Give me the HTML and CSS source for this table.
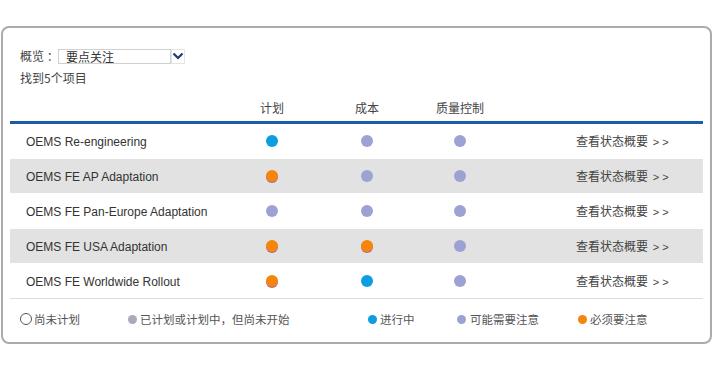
FILE: index.html
```html
<!DOCTYPE html>
<html lang="zh-CN">
<head>
<meta charset="utf-8">
<title>概览</title>
<link rel="stylesheet" href="styles.css">
</head>
<body>
<div class="panel">
  <div class="filter">
    <span class="filter-label">概览 ：</span>
    <span class="select">要点关注</span>
    <span class="select-btn">
      <svg width="12" height="8" viewBox="0 0 12 8"><path d="M1.5 1.5 L6 6 L10.5 1.5" fill="none" stroke="#1d3b6e" stroke-width="2.2"/></svg>
    </span>
  </div>
  <div class="count">找到5个项目</div>

  <div class="table">
    <div class="thead grid">
      <span></span>
      <span class="c">计划</span>
      <span class="c">成本</span>
      <span class="c">质量控制</span>
      <span></span>
    </div>
    <div class="row grid">
      <span class="name">OEMS Re-engineering</span>
      <span class="c"><i class="dot blue"></i></span>
      <span class="c"><i class="dot lav"></i></span>
      <span class="c"><i class="dot lav"></i></span>
      <span class="link">查看状态概要 <b>&gt; &gt;</b></span>
    </div>
    <div class="row grid alt">
      <span class="name">OEMS FE AP Adaptation</span>
      <span class="c"><i class="dot orange"></i></span>
      <span class="c"><i class="dot lav"></i></span>
      <span class="c"><i class="dot lav"></i></span>
      <span class="link">查看状态概要 <b>&gt; &gt;</b></span>
    </div>
    <div class="row grid">
      <span class="name">OEMS FE Pan-Europe Adaptation</span>
      <span class="c"><i class="dot lav"></i></span>
      <span class="c"><i class="dot lav"></i></span>
      <span class="c"><i class="dot lav"></i></span>
      <span class="link">查看状态概要 <b>&gt; &gt;</b></span>
    </div>
    <div class="row grid alt">
      <span class="name">OEMS FE USA Adaptation</span>
      <span class="c"><i class="dot orange"></i></span>
      <span class="c"><i class="dot orange"></i></span>
      <span class="c"><i class="dot lav"></i></span>
      <span class="link">查看状态概要 <b>&gt; &gt;</b></span>
    </div>
    <div class="row grid last">
      <span class="name">OEMS FE Worldwide Rollout</span>
      <span class="c"><i class="dot orange"></i></span>
      <span class="c"><i class="dot blue"></i></span>
      <span class="c"><i class="dot lav"></i></span>
      <span class="link">查看状态概要 <b>&gt; &gt;</b></span>
    </div>
  </div>

  <div class="legend">
    <span class="lg lg1"><i class="ldot open"></i>尚未计划</span>
    <span class="lg lg2"><i class="ldot grey"></i>已计划或计划中，但尚未开始</span>
    <span class="lg lg3"><i class="ldot blue"></i>进行中</span>
    <span class="lg lg4"><i class="ldot lav"></i>可能需要注意</span>
    <span class="lg lg5"><i class="ldot orange"></i>必须要注意</span>
  </div>
</div>
</body>
</html>
```

FILE: styles.css
```css
html, body {
  margin: 0;
  padding: 0;
  background: #fff;
}
body {
  font-family: "Noto Sans CJK SC", "Liberation Sans", sans-serif;
  font-size: 12px;
  color: #444;
}
.panel {
  margin: 26px 1px 0 1px;
  height: 318px;
  box-sizing: border-box;
  border: 2px solid #ababab;
  border-radius: 8px;
  padding: 20px 7px 0 7px;
}
.filter {
  display: flex;
  align-items: center;
  height: 16px;
  padding-left: 10px;
}
.filter-label {
  width: 38px;
  line-height: 16px;
  white-space: nowrap;
}
.select {
  box-sizing: border-box;
  width: 113px;
  height: 15px;
  border: 1px solid #d0d0d0;
  line-height: 13px;
  padding-left: 7px;
  font-size: 12px;
  color: #333;
}
.select-btn {
  box-sizing: border-box;
  width: 14px;
  height: 15px;
  border: 1px solid #e4e4e4;
  display: flex;
  align-items: center;
  justify-content: center;
}
.count {
  margin-top: 6px;
  height: 16px;
  line-height: 16px;
  padding-left: 10px;
}
.grid {
  display: grid;
  grid-template-columns: 226px 72px 118px 68px 1fr;
  align-items: center;
  line-height: 16px;
}
.thead {
  height: 38px;
  box-sizing: border-box;
  padding-bottom: 5px;
  align-items: end;
  border-bottom: 3px solid #1c5ba7;
}
.c {
  text-align: center;
  display: flex;
  justify-content: center;
}
.row {
  height: 35px;
  box-sizing: border-box;
  border-bottom: 1px solid #fff;
}
.row.alt {
  background: #e2e2e2;
}
.row.last {
  border-bottom-color: #dcdcdc;
}
.name {
  padding-left: 16px;
  padding-top: 2px;
  font-family: "Liberation Sans", Arial, sans-serif;
  font-size: 12px;
  color: #333;
}
.link {
  padding-left: 82px;
  color: #444;
  white-space: nowrap;
}
.link b {
  font-weight: normal;
  font-family: "Liberation Sans", Arial, sans-serif;
  font-size: 11px;
  margin-left: 2px;
}
.dot {
  display: block;
  width: 12px;
  height: 12px;
  border-radius: 50%;
}
.dot.blue { background: #0d9de0; }
.dot.lav { background: #9ca3d4; }
.dot.orange { background: #f7840c; box-shadow: 0 1px 0 #a56a9a; }
.legend {
  display: flex;
  align-items: center;
  height: 40px;
  font-size: 11.5px;
  color: #555;
}
.lg {
  display: flex;
  align-items: center;
}
.lg1 { margin-left: 10px; width: 108px; }
.lg2 { width: 240px; }
.lg3 { width: 89px; }
.lg4 { width: 121px; }
.ldot {
  display: block;
  width: 9px;
  height: 9px;
  border-radius: 50%;
  margin-right: 3px;
}
.ldot.open {
  box-sizing: border-box;
  width: 12px;
  height: 12px;
  border: 1.5px solid #555;
  margin-right: 2px;
}
.ldot.grey { background: #a9abb8; }
.ldot.blue { background: #0d9de0; }
.ldot.lav { background: #9ca3d4; margin-right: 4px; }
.ldot.orange { background: #f7840c; }
```
